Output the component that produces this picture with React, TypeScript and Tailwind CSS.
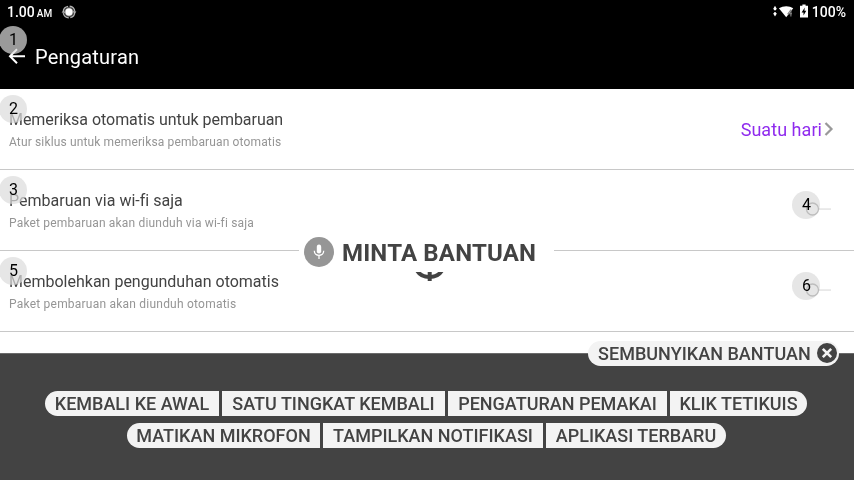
import type { ReactNode } from 'react';

function Badge({ n, className }: { n: number; className: string }) {
  return (
    <span
      className={`absolute flex h-7 w-7 items-center justify-center rounded-full bg-[#dbdbdb]/70 text-[16px] leading-none text-black ${className}`}
    >
      {n}
    </span>
  );
}

function StatusBar() {
  return (
    <div className="flex h-6 items-center justify-between pl-[7px] pr-2 text-[14px] font-medium text-white">
      <div className="flex items-center">
        <span>1.00</span>
        <span className="ml-[2px] mt-[3px] text-[10px]">AM</span>
        <svg className="ml-[9px]" width="16" height="14" viewBox="0 0 16 14">
          <circle cx="8" cy="7" r="5" fill="#555" />
          <circle cx="8" cy="7" r="3.7" fill="#fff" />
          <circle cx="8" cy="7" r="5.8" fill="none" stroke="#b0b0b0" strokeWidth="1.3" strokeDasharray="7.5 1.6" />
          <path d="M0.6 7.4l2.2-2.4 1.2 3zM15.4 6.6l-2.2 2.4-1.2-3z" fill="#b5b5b5" />
        </svg>
      </div>
      <div className="flex items-center">
        <svg width="38" height="16" viewBox="0 0 38 16">
          <path d="M3 1.8l2 3.4H4v1H2v-1H1zM3 12.4L1 9.2h1V8.2h2v1h1z" fill="#fff" />
          <path d="M6.9 4.3C11.4 1.4 17.2 1.4 21.2 4.3L14.2 13.2z" fill="#fff" />
          <path d="M19 5.6l-3 4.2h4M18.9 5.8v6.6" fill="none" stroke="#888" strokeWidth="1.1" />
          <path d="M30.4 .4h3.2v1.4H36V13.4h-8V1.8h2.4z" fill="#fff" />
          <path d="M32.8 3.6l-3.2 4.8h1.9v3.2l2.8-4.8h-1.9z" fill="#000" />
        </svg>
        <span className="ml-[2px]">100%</span>
      </div>
    </div>
  );
}

type RowProps = { n: number; title: string; titleClass: string; sub: string; subClass: string; children: ReactNode };

function Row({ n, title, titleClass, sub, subClass, children }: RowProps) {
  return (
    <div className="relative flex h-[81px] shrink-0 items-start justify-between border-b border-[#c8c8c8] pl-[9px]">
      <div className="pt-[21px]">
        <div className={`text-[16px] leading-5 text-[#434343] ${titleClass}`}>{title}</div>
        <div className={`mt-[4px] text-[12px] leading-4 text-[#959595] ${subClass}`}>{sub}</div>
      </div>
      {children}
      <Badge n={n} className="left-[-1px] top-[6px] pl-px" />
    </div>
  );
}

function Toggle({ n }: { n: number }) {
  return (
    <div className="relative mr-[23px] mt-[32px] flex items-center">
      <Badge n={n} className="left-[-12px] top-[-11px] pl-px" />
      <svg className="relative mix-blend-multiply" width="27" height="14" viewBox="0 0 27 14">
        <path d="M15 7.1h12" stroke="#e8e8e8" strokeWidth="1.8" />
        <circle cx="8.5" cy="7" r="6" fill="none" stroke="#d2d2d2" strokeWidth="1.3" />
      </svg>
    </div>
  );
}

function Command({ children, className }: { children: ReactNode; className: string }) {
  return <button className={`h-[25px] bg-[#f3f3f3] text-center ${className}`}>{children}</button>;
}

export default function App() {
  return (
    <div className="relative flex h-[480px] w-[854px] flex-col overflow-hidden bg-white font-[Roboto,sans-serif]">
      <header className="relative h-[89px] shrink-0 bg-black">
        <StatusBar />
        <div className="flex h-[66px] items-center pl-[8px] text-white">
          <svg width="18" height="18" viewBox="0 0 18 18" fill="none" stroke="#fff" strokeWidth="2">
            <path d="M17 8.2H2.5M9 1.2l-7 7 7 7" />
          </svg>
          <h1 className="ml-[9px] text-[20px] leading-6 tracking-[0.22px]">Pengaturan</h1>
        </div>
        <Badge n={1} className="left-[-1px] top-[26px] pl-px" />
      </header>

      <main className="flex h-[264px] shrink-0 flex-col">
        <Row
          n={2}
          title="Memeriksa otomatis untuk pembaruan"
          titleClass="tracking-[-0.04px]"
          sub="Atur siklus untuk memeriksa pembaruan otomatis"
          subClass="tracking-[0.14px]"
        >
          <div className="mr-[20px] mt-[29px] flex items-center text-[18px] leading-6 text-[#8f2bee]">
            <span className="tracking-[0.05px]">Suatu hari</span>
            <svg className="mt-[-2px] ml-[2px]" width="10" height="14" viewBox="0 0 10 14" fill="none" stroke="#999" strokeWidth="2.2">
              <path d="M1.5 1l6 6-6 6" />
            </svg>
          </div>
        </Row>
        <Row
          n={3}
          title="Pembaruan via wi-fi saja"
          titleClass="tracking-[0.01px]"
          sub="Paket pembaruan akan diunduh via wi-fi saja"
          subClass="tracking-[0.18px]"
        >
          <Toggle n={4} />
        </Row>
        <Row
          n={5}
          title="Membolehkan pengunduhan otomatis"
          titleClass=""
          sub="Paket pembaruan akan diunduh otomatis"
          subClass="tracking-[0.22px]"
        >
          <Toggle n={6} />
        </Row>
      </main>

      <footer className="flex flex-1 flex-col items-center gap-[7px] border-t border-[#6b6b6b] bg-[#434343] pr-[2px] pt-[37px] text-[18px] font-medium leading-[25px] text-[#434343]">
        <div className="flex gap-[3px]">
          <Command className="w-[174px] rounded-l-full">KEMBALI KE AWAL</Command>
          <Command className="w-[223px]">SATU TINGKAT KEMBALI</Command>
          <Command className="w-[219px]">PENGATURAN PEMAKAI</Command>
          <Command className="w-[137px] rounded-r-full">KLIK TETIKUIS</Command>
        </div>
        <div className="flex gap-[3px]">
          <Command className="w-[193px] rounded-l-full pl-px">MATIKAN MIKROFON</Command>
          <Command className="w-[220px] pl-px">TAMPILKAN NOTIFIKASI</Command>
          <Command className="w-[180px] rounded-r-full pl-px">APLIKASI TERBARU</Command>
        </div>
      </footer>

      <svg className="absolute left-[410px] top-[272px]" width="40" height="10" viewBox="0 0 40 10">
        <path d="M7 -1.5C12 7.2 27 7.2 32 -1.5" fill="none" stroke="#434343" strokeWidth="4" />
        <path d="M19.7 0v9" stroke="#434343" strokeWidth="4" />
      </svg>
      <div className="absolute left-[299px] top-[232px] flex h-[40px] w-[255px] items-center bg-white pl-[5px]">
        <span className="flex h-[30px] w-[30px] items-center justify-center rounded-full bg-[#969696]">
          <svg width="14" height="16" viewBox="0 0 14 16">
            <rect x="4.8" y="0.5" width="4.4" height="9" rx="2.2" fill="#fff" />
            <path d="M2.3 6.8c0 6 9.4 6 9.4 0M7 11.5V15" fill="none" stroke="#fff" strokeWidth="1.3" />
          </svg>
        </span>
        <span className="ml-[8px] mt-[2px] whitespace-nowrap text-[24px] font-bold leading-none tracking-[0.17px] text-[#434343]">
          MINTA BANTUAN
        </span>
      </div>
      <div className="absolute left-[588px] top-[341px] flex h-[25px] w-[251px] items-center justify-between rounded-full bg-[#f3f3f3] pl-[10px] pr-[2px] text-[18px] font-medium text-[#434343]">
        <span className="whitespace-nowrap tracking-[0.03px]">SEMBUNYIKAN BANTUAN</span>
        <svg className="mt-[-1px]" width="20" height="20" viewBox="0 0 20 20">
          <circle cx="10" cy="10" r="10" fill="#434343" />
          <path d="M5.8 5.8l8.4 8.4M14.2 5.8l-8.4 8.4" stroke="#f3f3f3" strokeWidth="2.6" />
        </svg>
      </div>
    </div>
  );
}
